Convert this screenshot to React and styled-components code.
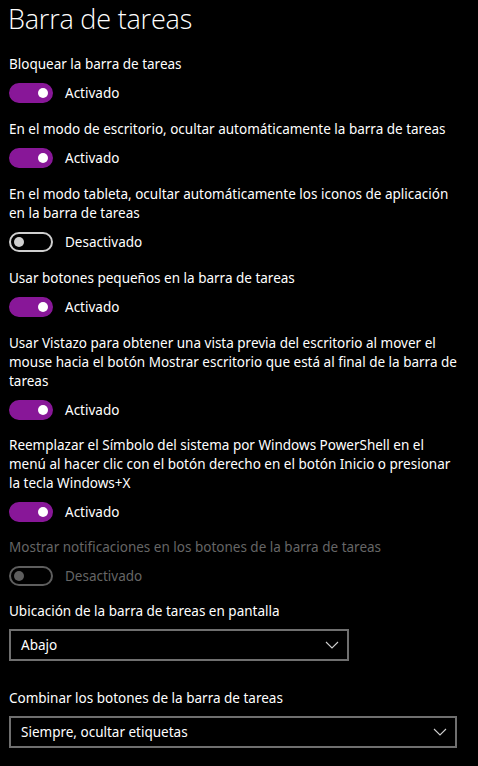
import React from 'react'
import styled, { createGlobalStyle } from 'styled-components'

const GlobalStyle = createGlobalStyle`
  html, body {
    margin: 0;
    padding: 0;
    background: #000;
  }
  body {
    font-family: "Noto Sans", "Open Sans", sans-serif;
    color: #fff;
    -webkit-font-smoothing: antialiased;
  }
`

const Page = styled.div`
  width: 478px;
  height: 766px;
  overflow: hidden;
  background: #000;
  padding: 0 0 0 9px;
  box-sizing: border-box;
`

const Title = styled.h1`
  margin: 0;
  padding-top: 1px;
  margin-left: -1px;
  font-family: "Open Sans", "Noto Sans", sans-serif;
  font-weight: 300;
  font-size: 27px;
  line-height: 36px;
  height: 54px;
  letter-spacing: -0.2px;
`

const Group = styled.div`
  margin-bottom: ${props => props.gap || 17}px;
`

const Label = styled.div`
  font-size: 13.5px;
  line-height: 19px;
  max-width: 450px;
  color: ${props => props.disabled ? '#666' : '#fff'};
`

const ToggleRow = styled.div`
  display: flex;
  align-items: center;
  gap: 12px;
  margin-top: 9px;
  height: 20px;
`

const Track = styled.div`
  width: 44px;
  height: 20px;
  box-sizing: border-box;
  border-radius: 10px;
  display: flex;
  align-items: center;
  justify-content: ${props => props.on ? 'flex-end' : 'flex-start'};
  background: ${props => props.on ? '#881798' : 'transparent'};
  border: 2px solid ${props => props.on ? '#881798' : props.disabled ? '#5e5e5e' : '#cfcfcf'};
  padding: 0 3px;
`

const Thumb = styled.span`
  width: 10px;
  height: 10px;
  border-radius: 50%;
  background: ${props => props.on ? '#fff' : props.disabled ? '#5e5e5e' : '#cfcfcf'};
`

const State = styled.span`
  font-size: 13.5px;
  color: ${props => props.disabled ? '#666' : '#fff'};
`

const Select = styled.div`
  margin-top: 8px;
  width: ${props => props.width}px;
  height: 32px;
  box-sizing: border-box;
  border: 2px solid #6f6f6f;
  display: flex;
  align-items: center;
  justify-content: space-between;
  padding: 0 8px 0 10px;
  font-size: 13.5px;
`

const Chevron = () => (
  <svg width="14" height="8" viewBox="0 0 14 8">
    <path d="M1 1 L7 7 L13 1" fill="none" stroke="#cfcfcf" strokeWidth="1.1" />
  </svg>
)

const Toggle = ({ on, disabled }) => (
  <ToggleRow>
    <Track on={on} disabled={disabled}>
      <Thumb on={on} disabled={disabled} />
    </Track>
    <State disabled={disabled}>{on ? 'Activado' : 'Desactivado'}</State>
  </ToggleRow>
)

const settings = [
  { label: 'Bloquear la barra de tareas', on: true, gap: 17 },
  { label: 'En el modo de escritorio, ocultar automáticamente la barra de tareas', on: true, gap: 17 },
  { label: 'En el modo tableta, ocultar automáticamente los iconos de aplicación en la barra de tareas', on: false, gap: 17 },
  { label: 'Usar botones pequeños en la barra de tareas', on: true, gap: 17 },
  { label: 'Usar Vistazo para obtener una vista previa del escritorio al mover el mouse hacia el botón Mostrar escritorio que está al final de la barra de tareas', on: true, gap: 16 },
  { label: 'Reemplazar el Símbolo del sistema por Windows PowerShell en el menú al hacer clic con el botón derecho en el botón Inicio o presionar la tecla Windows+X', on: true, gap: 16 },
  { label: 'Mostrar notificaciones en los botones de la barra de tareas', on: false, disabled: true, gap: 16 },
]

export default function App() {
  return (
    <Page>
      <GlobalStyle />
      <Title>Barra de tareas</Title>
      {settings.map((s, i) => (
        <Group key={i} gap={s.gap}>
          <Label disabled={s.disabled}>{s.label}</Label>
          <Toggle on={s.on} disabled={s.disabled} />
        </Group>
      ))}
      <Group gap={28}>
        <Label>Ubicación de la barra de tareas en pantalla</Label>
        <Select width={340}>
          <span>Abajo</span>
          <Chevron />
        </Select>
      </Group>
      <Group>
        <Label>Combinar los botones de la barra de tareas</Label>
        <Select width={448}>
          <span>Siempre, ocultar etiquetas</span>
          <Chevron />
        </Select>
      </Group>
    </Page>
  )
}
